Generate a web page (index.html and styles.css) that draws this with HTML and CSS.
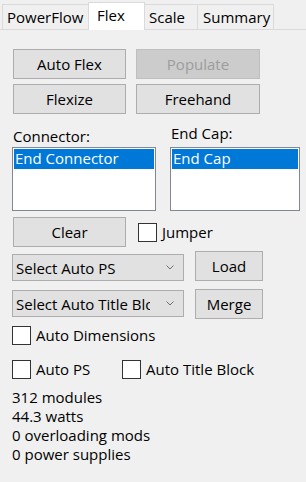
FILE: index.html
```html
<!DOCTYPE html>
<html>
<head>
<meta charset="utf-8">
<link rel="stylesheet" href="styles.css">
</head>
<body>
<div class="tabs">
  <div class="tab tab-powerflow">PowerFlow</div>
  <div class="tab tab-flex active">Flex</div>
  <div class="tab tab-scale">Scale</div>
  <div class="tab tab-summary">Summary</div>
</div>
<div class="panel">
  <div class="btnrow">
    <button class="btn w113">Auto Flex</button>
    <button class="btn w124 disabled">Populate</button>
  </div>
  <div class="btnrow row2">
    <button class="btn w113">Flexize</button>
    <button class="btn w124">Freehand</button>
  </div>
  <div class="lists">
    <div class="col col-conn">
      <div class="lbl">Connector:</div>
      <div class="listbox"><div class="sel">End Connector</div></div>
    </div>
    <div class="col col-cap">
      <div class="lbl">End Cap:</div>
      <div class="listbox"><div class="sel">End Cap</div></div>
    </div>
  </div>
  <div class="clearrow">
    <button class="btn w113">Clear</button>
    <div class="check jumper"><span class="box"></span><span>Jumper</span></div>
  </div>
  <div class="comborow combo1">
    <div class="combo"><span class="ctext">Select Auto PS</span><svg class="chev" width="8" height="5" viewBox="0 0 8 5"><path d="M0.5 0.5 L4 4 L7.5 0.5" stroke="#707070" fill="none"/></svg></div>
    <button class="btn w68">Load</button>
  </div>
  <div class="comborow combo2">
    <div class="combo"><span class="ctext clip">Select Auto Title Block</span><svg class="chev" width="8" height="5" viewBox="0 0 8 5"><path d="M0.5 0.5 L4 4 L7.5 0.5" stroke="#707070" fill="none"/></svg></div>
    <button class="btn w68">Merge</button>
  </div>
  <div class="check dims"><span class="box"></span><span>Auto Dimensions</span></div>
  <div class="autorow">
    <div class="check autops"><span class="box"></span><span>Auto PS</span></div>
    <div class="check"><span class="box"></span><span>Auto Title Block</span></div>
  </div>
  <div class="stats">
    <div>312 modules</div>
    <div>44.3 watts</div>
    <div>0 overloading mods</div>
    <div>0 power supplies</div>
  </div>
</div>
</body>
</html>
```
FILE: styles.css
```css
* { box-sizing: border-box; }
html, body { margin: 0; padding: 0; }
body {
  width: 306px;
  height: 482px;
  overflow: hidden;
  background: #f0f0f0;
  font-family: "Open Sans", "Noto Sans", sans-serif;
  font-size: 15px;
  color: #000;
}
.tabs {
  display: flex;
  align-items: flex-end;
  height: 30px;
  padding-left: 2px;
  border-bottom: 1px solid #dadada;
}
.tab {
  height: 25px;
  line-height: 24px;
  border-top: 1px solid #dadada;
  border-left: 1px solid #dadada;
  background: #f0f0f0;
  white-space: nowrap;
}
.tab-powerflow { width: 86px; padding-left: 4px; }
.tab-flex {
  width: 57px;
  height: 28px;
  margin-bottom: -1px;
  border-right: 1px solid #dadada;
  background: #fff;
  padding-left: 8px;
  line-height: 24px;
  position: relative;
}
.tab-scale { width: 52px; border-left: none; padding-left: 4px; }
.tab-summary { width: 77px; border-right: 1px solid #dadada; padding-left: 5px; }

.panel {
  display: flex;
  flex-direction: column;
  padding: 19px 0 0 12px;
}
.btn {
  height: 30px;
  background: #e1e1e1;
  border: 1px solid #adadad;
  font: inherit;
  color: #000;
  padding: 0;
  line-height: 27px;
  text-align: center;
}
.btn.disabled { background: #cccccc; border-color: #bfbfbf; color: #9d9d9d; }
.w113 { width: 113px; }
.w124 { width: 124px; }
.w68 { width: 68px; }
.btnrow { display: flex; gap: 10px; margin-left: 1px; }
.row2 { margin-top: 5px; }

.lists {
  display: flex;
  align-items: flex-end;
  gap: 14px;
  margin-top: 9px;
}
.col { display: flex; flex-direction: column; }
.col-conn { width: 144px; }
.col-cap { width: 130px; }
.lbl { line-height: 20px; height: 20px; padding-left: 1px; }
.col-conn .lbl { margin-bottom: 1px; }
.col-cap .lbl { margin-bottom: 4px; }
.listbox {
  height: 64px;
  background: #fff;
  border: 1px solid #828790;
  padding: 1px 1px 0 1px;
}
.sel {
  height: 20px;
  line-height: 19px;
  background: #0078d7;
  color: #fff;
  padding-left: 1px;
  white-space: nowrap;
}

.clearrow {
  display: flex;
  align-items: center;
  margin-top: 6px;
  margin-left: 1px;
}
.check { display: flex; align-items: center; gap: 5px; white-space: nowrap; line-height: 20px; }
.box {
  width: 19px;
  height: 19px;
  border: 1px solid #333;
  background: #fff;
  flex: none;
}
.jumper { margin-left: 12px; }

.comborow { display: flex; gap: 11px; }
.combo1 { margin-top: 4px; align-items: flex-end; }
.combo2 { margin-top: 8px; align-items: flex-start; }
.combo2 .combo { margin-top: 1px; }
.combo {
  width: 172px;
  height: 27px;
  background: #e1e1e1;
  border: 1px solid #adadad;
  display: flex;
  align-items: center;
  padding-left: 3px;
}
.ctext {
  width: 137px;
  overflow: hidden;
  white-space: nowrap;
  line-height: 20px;
}
.ctext.clip { width: 134px; }
.chev { margin-left: auto; margin-right: 9px; }

.dims { margin-top: 6px; }
.autorow { display: flex; margin-top: 14px; }
.autops { width: 110px; }

.stats { margin-top: 9px; line-height: 19px; }
```
